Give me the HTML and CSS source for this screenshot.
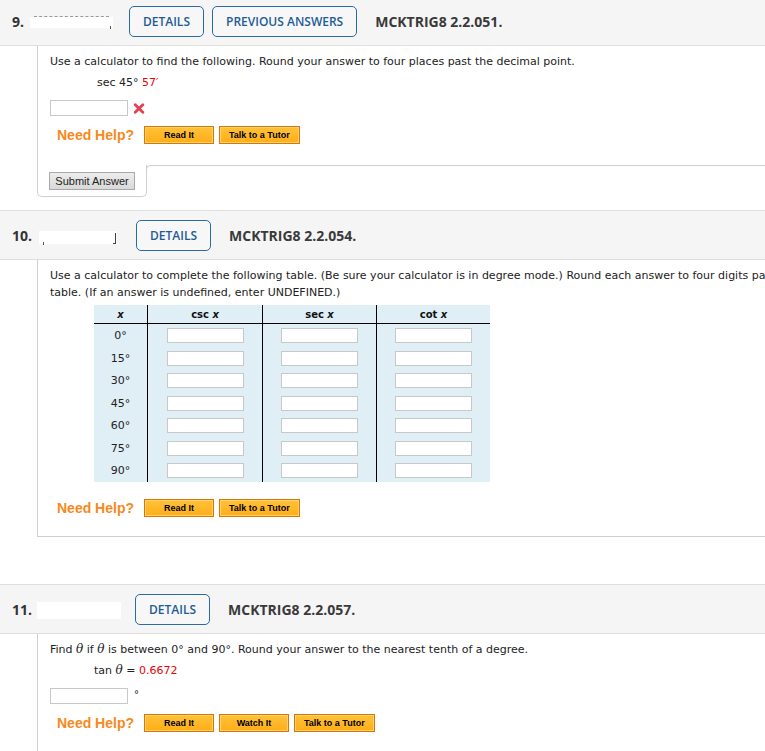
FILE: index.html
```html
<!DOCTYPE html>
<html>
<head>
<meta charset="utf-8">
<link rel="stylesheet" href="styles.css">
</head>
<body>
<div class="page">

  <section class="question q9">
    <div class="qhead">
      <span class="qnum">9.</span>
      <span class="redact redact-9"></span>
      <a class="obtn">DETAILS</a>
      <a class="obtn">PREVIOUS ANSWERS</a>
      <span class="qcode">MCKTRIG8 2.2.051.</span>
    </div>
    <div class="qbody no-bottom">
      <p class="prompt">Use a calculator to find the following. Round your answer to four places past the decimal point.</p>
      <div class="expr expr-sec">sec 45° <span class="red">57′</span></div>
      <div class="answer-row">
        <span class="ans-input"></span>
        <svg class="xmark" width="12" height="11" viewBox="0 0 12 11"><path d="M2.2 1.8 L9.8 9.2 M9.8 1.8 L2.2 9.2" stroke="#e5404c" stroke-width="2.8" stroke-linecap="round" fill="none"/></svg>
      </div>
      <div class="help-row">
        <span class="need-help">Need Help?</span>
        <span class="hbtn">Read It</span>
        <span class="hbtn">Talk to a Tutor</span>
      </div>
    </div>
    <div class="submit-row">
      <div class="submit-tab"><span class="submit-btn">Submit Answer</span></div>
      <div class="submit-fill"></div>
    </div>
  </section>

  <section class="question q10">
    <div class="qhead">
      <span class="qnum">10.</span>
      <span class="redact redact-10"></span>
      <a class="obtn">DETAILS</a>
      <span class="qcode">MCKTRIG8 2.2.054.</span>
    </div>
    <div class="qbody tall">
      <p class="prompt"><span class="nowrap">Use a calculator to complete the following table. (Be sure your calculator is in degree mode.) Round each answer to four digits past the decimal point, where applicable, in the</span><br>table. (If an answer is undefined, enter UNDEFINED.)</p>
      <table class="trig">
        <thead>
          <tr><th class="c0"><i>x</i></th><th class="c1">csc <i>x</i></th><th class="c2">sec <i>x</i></th><th class="c3">cot <i>x</i></th></tr>
        </thead>
        <tbody>
          <tr><td>0°</td><td><span class="cell-input"></span></td><td><span class="cell-input"></span></td><td><span class="cell-input"></span></td></tr>
          <tr><td>15°</td><td><span class="cell-input"></span></td><td><span class="cell-input"></span></td><td><span class="cell-input"></span></td></tr>
          <tr><td>30°</td><td><span class="cell-input"></span></td><td><span class="cell-input"></span></td><td><span class="cell-input"></span></td></tr>
          <tr><td>45°</td><td><span class="cell-input"></span></td><td><span class="cell-input"></span></td><td><span class="cell-input"></span></td></tr>
          <tr><td>60°</td><td><span class="cell-input"></span></td><td><span class="cell-input"></span></td><td><span class="cell-input"></span></td></tr>
          <tr><td>75°</td><td><span class="cell-input"></span></td><td><span class="cell-input"></span></td><td><span class="cell-input"></span></td></tr>
          <tr><td>90°</td><td><span class="cell-input"></span></td><td><span class="cell-input"></span></td><td><span class="cell-input"></span></td></tr>
        </tbody>
      </table>
      <div class="help-row help-table">
        <span class="need-help">Need Help?</span>
        <span class="hbtn">Read It</span>
        <span class="hbtn">Talk to a Tutor</span>
      </div>
    </div>
  </section>

  <section class="question q11">
    <div class="qhead">
      <span class="qnum">11.</span>
      <span class="redact redact-11"></span>
      <a class="obtn">DETAILS</a>
      <span class="qcode">MCKTRIG8 2.2.057.</span>
    </div>
    <div class="qbody open">
      <p class="prompt">Find <i class="theta">θ</i> if <i class="theta">θ</i> is between 0° and 90°. Round your answer to the nearest tenth of a degree.</p>
      <div class="expr expr-tan">tan <i class="theta">θ</i> = <span class="red">0.6672</span></div>
      <div class="answer-row">
        <span class="ans-input"></span>
        <span class="deg">°</span>
      </div>
      <div class="help-row">
        <span class="need-help">Need Help?</span>
        <span class="hbtn">Read It</span>
        <span class="hbtn">Watch It</span>
        <span class="hbtn">Talk to a Tutor</span>
      </div>
    </div>
  </section>

</div>
</body>
</html>
```

FILE: styles.css
```css
html, body {
  margin: 0;
  padding: 0;
  background: #fff;
}
body {
  width: 765px;
  overflow: hidden;
  font-family: "DejaVu Sans", Verdana, sans-serif;
  font-size: 11px;
  color: #222;
}
.page {
  width: 1100px;
  margin-top: -4px;
}

/* header bar */
.qhead {
  display: flex;
  align-items: center;
  height: 48px;
  background: #f5f5f5;
  border-top: 1px solid #dedede;
  border-bottom: 1px solid #dedede;
  padding-left: 12px;
  font-family: "Open Sans", sans-serif;
}
.qnum {
  font-size: 14px;
  font-weight: 700;
  color: #333;
}
.redact {
  display: inline-block;
  background: #fff;
  position: relative;
}
.redact-9 { width: 83px; height: 11px; margin-left: 6px; margin-right: 16px; margin-top: 2px; }
.redact-9::before {
  content: "";
  position: absolute;
  left: 4px; right: 4px; top: -1px;
  border-top: 1px dashed #999;
}
.redact-9::after {
  content: "";
  position: absolute;
  right: 2px; bottom: -1px;
  width: 1px; height: 3px;
  background: #555;
}
.redact-10 { width: 78px; height: 13px; margin-left: 7px; margin-right: 19px; margin-top: 4px; }
.redact-10::before {
  content: "";
  position: absolute;
  left: 4px; bottom: -1px;
  width: 1px; height: 3px;
  background: #555;
}
.redact-10::after {
  content: "";
  position: absolute;
  right: 1px; top: 2px;
  width: 3px; height: 11px;
  border-right: 1px solid #444;
  border-bottom: 1px solid #444;
  box-sizing: border-box;
}
.redact-11 { width: 84px; height: 17px; margin-left: 5px; margin-right: 14px; margin-top: 3px; }

.obtn {
  display: inline-flex;
  align-items: center;
  height: 29px;
  padding: 0 13px;
  border: 1px solid #2a6aa5;
  border-radius: 5px;
  color: #1f5c96;
  font-size: 12px;
  font-weight: 600;
  background: #f7f7f7;
  margin-right: 8px;
}
.qcode {
  margin-left: 10px;
  font-size: 14px;
  font-weight: 700;
  color: #3a3a3a;
}

/* body */
.qbody {
  margin-left: 37px;
  border-left: 1px solid #cfcfcf;
  border-bottom: 1px solid #cfcfcf;
  padding: 7px 0 20px 12px;
}
.qbody.tall { padding-bottom: 19px; }
.qbody.no-bottom { border-bottom: none; padding-bottom: 21px; }
.qbody.open { border-bottom: none; }
.prompt {
  margin: 0;
  line-height: 17px;
}
.nowrap { white-space: nowrap; }
.red { color: #ee0000; }
.theta {
  font-family: "DejaVu Serif", serif;
  font-size: 12px;
}
.expr {
  margin-top: 4px;
  line-height: 17px;
}
.expr-sec { padding-left: 47px; }
.expr-tan { padding-left: 44px; }

.answer-row {
  display: flex;
  align-items: center;
  margin-top: 9px;
  height: 16px;
}
.ans-input {
  display: inline-block;
  width: 76px;
  height: 14px;
  border: 1px solid #c8c8c8;
  background: #fff;
}
.xmark { margin-left: 5px; margin-top: 1px; }
.deg { margin-left: 6px; margin-top: -3px; font-size: 10px; }

.help-row {
  display: flex;
  align-items: center;
  margin-top: 10px;
  padding-left: 7px;
  gap: 5px;
}
.need-help {
  font-family: "Liberation Sans", Arial, sans-serif;
  font-weight: 700;
  font-size: 14px;
  color: #f7891b;
  margin-right: 5px;
}
.hbtn {
  display: inline-flex;
  align-items: center;
  justify-content: center;
  box-sizing: border-box;
  min-width: 70px;
  height: 18px;
  padding: 0 9px;
  border: 1px solid #d7770b;
  box-shadow: inset 0 0 0 1px #ffd26a;
  background: linear-gradient(#ffc23a, #ffae17);
  font-family: "Liberation Sans", Arial, sans-serif;
  font-weight: 700;
  font-size: 9px;
  color: #000;
}

/* submit tab */
.submit-row {
  display: flex;
  align-items: flex-start;
}
.submit-tab {
  margin-left: 37px;
  width: 97px;
  padding: 7px 0 0 11px;
  height: 24px;
  border-left: 1px solid #cfcfcf;
  border-right: 1px solid #cfcfcf;
  border-bottom: 1px solid #cfcfcf;
  border-radius: 0 0 5px 5px;
}
.submit-btn {
  display: inline-flex;
  align-items: center;
  justify-content: center;
  box-sizing: border-box;
  width: 86px;
  height: 18px;
  border: 1px solid #a9a9a9;
  background: linear-gradient(#ececec, #d9d9d9);
  font-family: "Liberation Sans", Arial, sans-serif;
  font-size: 11px;
  color: #222;
}
.submit-fill {
  flex: 1;
  height: 8px;
  margin-left: -1px;
  border-top: 1px solid #cfcfcf;
  border-left: 1px solid #cfcfcf;
  border-top-left-radius: 5px;
}

.q10 { margin-top: 13px; }
.q11 { margin-top: 47px; }

/* table */
.trig {
  border-collapse: collapse;
  background: #e0eef6;
  margin: 4px 0 0 44px;
}
.trig th {
  height: 18px;
  padding: 0;
  border-bottom: 1px solid #000;
  font-size: 10px;
  font-weight: 700;
  color: #111;
}
.trig th + th, .trig td + td { border-left: 1px solid #000; }
.trig td {
  padding: 0;
  text-align: center;
  vertical-align: middle;
}
.trig tbody tr:nth-child(odd) td { height: 23px; }
.trig tbody tr:nth-child(even) td { height: 22px; }
.c0 { width: 53px; }
.c1 { width: 114px; }
.c2 { width: 113px; }
.c3 { width: 113px; }
.cell-input {
  display: inline-block;
  vertical-align: middle;
  width: 75px;
  height: 13px;
  border: 1px solid #c8c8c8;
  background: #fff;
}
.help-table { margin-top: 17px; }
```
